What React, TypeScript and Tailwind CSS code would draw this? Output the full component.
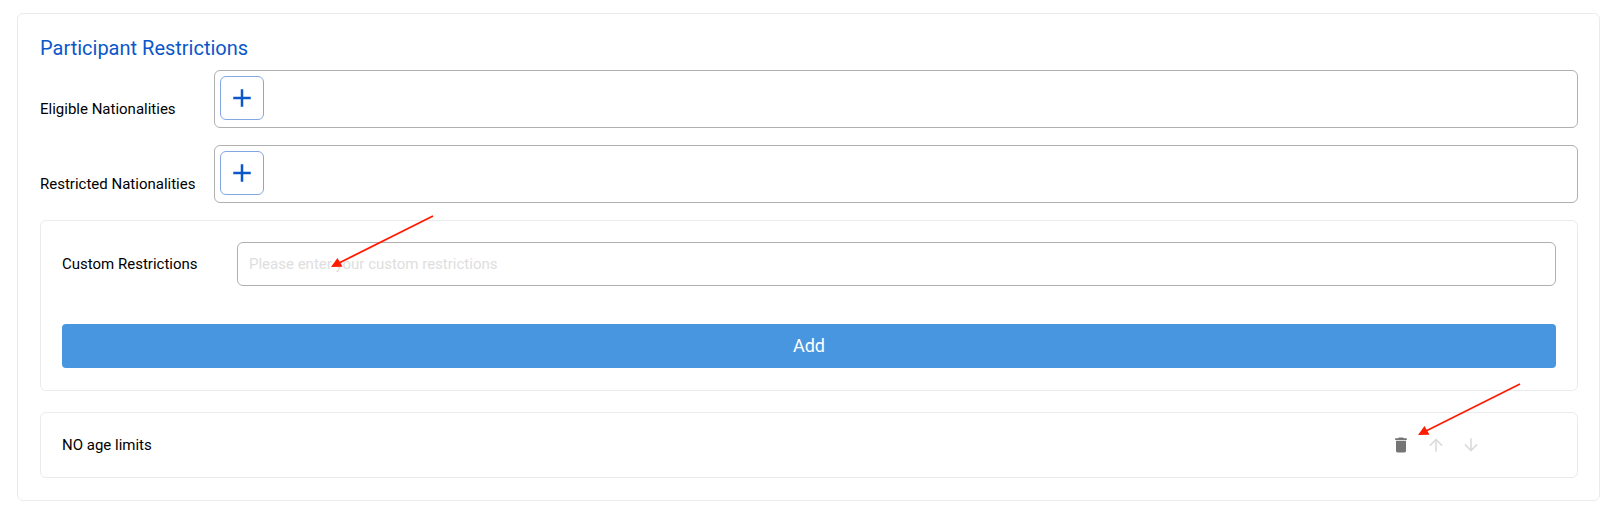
import React, { useState } from 'react';
import { MdAdd, MdArrowDownward, MdArrowUpward, MdDelete } from 'react-icons/md';

const nationalityFields = [
  { key: 'eligible', label: 'Eligible Nationalities' },
  { key: 'restricted', label: 'Restricted Nationalities' }
];

const Pointer = ({ className }: { className: string }) => (
  <svg
    className={`absolute pointer-events-none ${className}`}
    width="104"
    height="54"
    viewBox="0 0 104 54"
    aria-hidden="true"
  >
    <path d="M102 1L8 48" stroke="#ff1a00" strokeWidth="1.8" fill="none" />
    <path d="M0 52L6.5 43L11.5 51.8Z" fill="#ff1a00" />
  </svg>
);

const NationalityField = ({ id, label }: { id: string; label: string }) => (
  <div className="flex items-center">
    <span id={id} className="w-[174px] shrink-0 pt-5">
      {label}
    </span>
    <div
      role="group"
      aria-labelledby={id}
      className="flex flex-1 rounded-md border border-[#b0b0b0] p-[5px] pb-[7px]"
    >
      <button
        type="button"
        aria-label={`Add ${label}`}
        className="flex size-11 items-center justify-center rounded-md border border-[#84a7e2] text-[#0b57c9]"
      >
        <MdAdd className="size-[30px]" />
      </button>
    </div>
  </div>
);

export default function App() {
  const [restriction, setRestriction] = useState('');
  const [restrictions, setRestrictions] = useState(['NO age limits']);

  const addRestriction = () => {
    if (!restriction.trim()) return;
    setRestrictions([...restrictions, restriction.trim()]);
    setRestriction('');
  };

  const removeRestriction = (index: number) => {
    setRestrictions(restrictions.filter((_, i) => i !== index));
  };

  const moveRestriction = (from: number, to: number) => {
    const next = [...restrictions];
    [next[from], next[to]] = [next[to], next[from]];
    setRestrictions(next);
  };

  return (
    <div className="bg-white pt-[13px] pl-[17px] font-[Roboto,sans-serif] text-[15px] leading-5 text-black">
      <section className="rounded-md border border-[#ebebeb] pt-[22px] pr-[21px] pb-[22px] pl-[22px]">
        <h2 className="mb-[10px] text-xl leading-6 text-[#0b57c9]">Participant Restrictions</h2>

        <div className="flex flex-col gap-[17px]">
          {nationalityFields.map((field) => (
            <NationalityField key={field.key} id={field.key} label={field.label} />
          ))}
        </div>

        {/* Custom restriction form */}
        <div className="relative mt-[17px] flex flex-col gap-[38px] rounded-md border border-[#ebebeb] px-[21px] pt-[21px] pb-[22px]">
          <div className="flex items-center">
            <label htmlFor="custom" className="w-[175px] shrink-0">
              Custom Restrictions
            </label>
            <input
              id="custom"
              type="text"
              value={restriction}
              onChange={(e) => setRestriction(e.target.value)}
              placeholder="Please enter your custom restrictions"
              className="h-11 min-w-0 flex-1 rounded-md border border-[#b0b0b0] px-[11px] placeholder:text-[#dedede]"
            />
          </div>
          <button
            type="button"
            onClick={addRestriction}
            className="h-11 rounded bg-[#4896e0] text-lg text-white"
          >
            Add
          </button>
          <Pointer className="-top-[6px] left-[290px]" />
        </div>

        {/* Saved restrictions */}
        {restrictions.map((item, index) => (
          <div
            key={index}
            className="relative mt-[21px] flex items-center justify-between rounded-md border border-[#ebebeb] py-[22px] pr-[96px] pl-[21px]"
          >
            <span>{item}</span>
            <div className="flex gap-[15px] text-[#dcdcdc]">
              <button
                type="button"
                aria-label="Delete"
                onClick={() => removeRestriction(index)}
                className="text-[#757575]"
              >
                <MdDelete className="size-5" />
              </button>
              <button
                type="button"
                aria-label="Move up"
                disabled={index === 0}
                onClick={() => moveRestriction(index, index - 1)}
              >
                <MdArrowUpward className="size-5" />
              </button>
              <button
                type="button"
                aria-label="Move down"
                disabled={index === restrictions.length - 1}
                onClick={() => moveRestriction(index, index + 1)}
              >
                <MdArrowDownward className="size-5" />
              </button>
            </div>
            {index === 0 && <Pointer className="-top-[30px] right-[55px]" />}
          </div>
        ))}
      </section>
    </div>
  );
}
